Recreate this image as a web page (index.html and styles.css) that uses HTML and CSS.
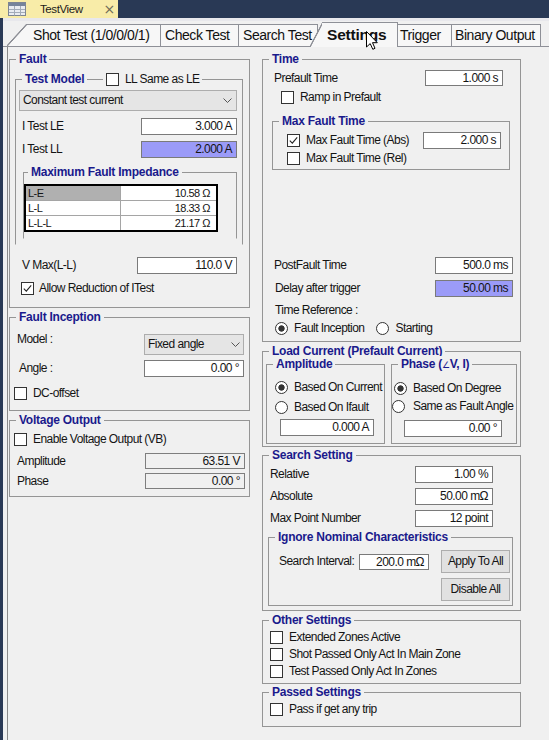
FILE: index.html
```html
<!DOCTYPE html>
<html>
<head>
<meta charset="utf-8">
<title>TestView</title>
<link rel="stylesheet" href="styles.css">
</head>
<body>
<div class="docbar">
  <div class="doctab">
    <svg class="docicon" viewBox="0 0 18 14"><rect x="0.5" y="0.5" width="17" height="13" fill="#e9ecf1" stroke="#7d8594"/><rect x="1" y="1" width="16" height="3" fill="#76849b"/><path d="M6.5 4v9.5M12.5 4v9.5M1 7.5h16M1 10.5h16" stroke="#a3acb9" stroke-width="1"/></svg>
    <span class="doctitle">TestView</span>
    <span class="docclose">×</span>
  </div>
</div>
<div class="main">
  <div class="docline"></div>
  <div class="tabs">
    <div class="tab slant t1">Shot Test (1/0/0/0/1)</div>
    <div class="tab plain t2">Check Test</div>
    <div class="tab plain t3">Search Test</div>
    <div class="tab slant sel">Settings</div>
    <div class="tab plain t5">Trigger</div>
    <div class="tab plain t6">Binary Output</div>
    <svg class="cursor" viewBox="0 0 12 19"><path d="M0.5 0.5V16L4.2 12.6L6.8 18.3L9 17.3L6.5 11.7H11.3Z" fill="#fff" stroke="#000" stroke-width="1" stroke-linejoin="round"/></svg>
  </div>
  <div class="page">
    <div class="col left">
      <div class="group g-fault">
        <span class="gt">Fault</span>
        <div class="group g-tm">
          <span class="gt">Test Model</span>
          <span class="gt gt-cb"><span class="cb"></span>LL Same as LE</span>
          <div class="combo c-model"><span>Constant test current</span><svg class="chev" viewBox="0 0 9 5"><polyline points="0.5,0.5 4.5,4.5 8.5,0.5"/></svg></div>
          <div class="row r-itle"><span class="lbl l6">I Test LE</span><span class="fld w96">3.000 A</span></div>
          <div class="row r-itll"><span class="lbl l6">I Test LL</span><span class="fld w96 hl">2.000 A</span></div>
          <div class="group g-mfi">
            <span class="gt">Maximum Fault Impedance</span>
            <div class="imp">
              <div class="c k selc">L-E</div><div class="c v">10.58 Ω</div>
              <div class="c k">L-L</div><div class="c v">18.33 Ω</div>
              <div class="c k last">L-L-L</div><div class="c v last">21.17 Ω</div>
            </div>
          </div>
        </div>
        <div class="row r-vmax"><span class="lbl l12">V Max(L-L)</span><span class="fld w100 m12">110.0 V</span></div>
        <div class="row r-allow"><span class="cb"><svg viewBox="0 0 11 11"><polyline points="1.8,5.6 4.3,8.1 9.2,2.4" fill="none" stroke="#222" stroke-width="1.1"/></svg></span><span>Allow Reduction of ITest</span></div>
      </div>

      <div class="group g-finc">
        <span class="gt">Fault Inception</span>
        <div class="row r-model"><span class="lbl l7 up">Model :</span><div class="combo c-fixed"><span>Fixed angle</span><svg class="chev" viewBox="0 0 9 5"><polyline points="0.5,0.5 4.5,4.5 8.5,0.5"/></svg></div></div>
        <div class="row r-angle"><span class="lbl l9">Angle :</span><span class="fld w100 m5">0.00 °</span></div>
        <div class="row r-dc"><span class="cb"></span><span>DC-offset</span></div>
      </div>

      <div class="group g-vout">
        <span class="gt">Voltage Output</span>
        <div class="row r-en"><span class="cb"></span><span>Enable Voltage Output (VB)</span></div>
        <div class="row r-amp"><span class="lbl l7">Amplitude</span><span class="fld dis w100 m4">63.51 V</span></div>
        <div class="row r-ph"><span class="lbl l7">Phase</span><span class="fld dis w100 m4">0.00 °</span></div>
      </div>
    </div>

    <div class="col right">
      <div class="group g-time">
        <span class="gt">Time</span>
        <div class="row r-pre"><span class="lbl l11">Prefault Time</span><span class="fld w78 m17">1.000 s</span></div>
        <div class="row r-ramp"><span class="cb"></span><span>Ramp in Prefault</span></div>
        <div class="group g-mft">
          <span class="gt">Max Fault Time</span>
          <div class="row r-abs"><span class="cb"><svg viewBox="0 0 11 11"><polyline points="1.8,5.6 4.3,8.1 9.2,2.4" fill="none" stroke="#222" stroke-width="1.1"/></svg></span><span>Max Fault Time (Abs)</span><span class="fld w78 m8">2.000 s</span></div>
          <div class="row r-rel"><span class="cb"></span><span>Max Fault Time (Rel)</span></div>
        </div>
        <div class="row r-post"><span class="lbl l11">PostFault Time</span><span class="fld w78 m7">500.0 ms</span></div>
        <div class="row r-delay"><span class="lbl l12">Delay after trigger</span><span class="fld w78 m7 hl">50.00 ms</span></div>
        <div class="r-tref">Time Reference :</div>
        <div class="row r-radio"><span class="rd on"></span><span>Fault Inception</span><span class="rd rd2"></span><span>Starting</span></div>
      </div>

      <div class="group g-load">
        <span class="gt">Load Current (Prefault Current)</span>
        <div class="load-in">
          <div class="group g-amp">
            <span class="gt">Amplitude</span>
            <div class="row r-bc"><span class="rd on"></span><span>Based On Current</span></div>
            <div class="row r-bi"><span class="rd"></span><span>Based On Ifault</span></div>
            <span class="fld f-amp">0.000 A</span>
          </div>
          <div class="group g-pha">
            <span class="gt">Phase (<span class="ang">∠</span>V, I)</span>
            <div class="row r-bd"><span class="rd on"></span><span>Based On Degree</span></div>
            <div class="row r-sf"><span class="rd"></span><span>Same as Fault Angle</span></div>
            <span class="fld f-pha">0.00 °</span>
          </div>
        </div>
      </div>

      <div class="group g-search">
        <span class="gt">Search Setting</span>
        <div class="row r-s r-s1"><span class="lbl l7">Relative</span><span class="fld w78 m27">1.00 %</span></div>
        <div class="row r-s"><span class="lbl l7">Absolute</span><span class="fld w78 m27">50.00 mΩ</span></div>
        <div class="row r-s"><span class="lbl l7">Max Point Number</span><span class="fld w78 m27">12 point</span></div>
        <div class="group g-ign">
          <span class="gt">Ignore Nominal Characteristics</span>
          <div class="row r-si"><span class="lbl si-l">Search Interval:</span><span class="fld si-f">200.0 mΩ</span><span class="btn si-b">Apply To All</span></div>
          <span class="btn btn2">Disable All</span>
        </div>
      </div>

      <div class="group g-other">
        <span class="gt">Other Settings</span>
        <div class="row r-o r-o1"><span class="cb"></span><span>Extended Zones Active</span></div>
        <div class="row r-o"><span class="cb"></span><span>Shot Passed Only Act In Main Zone</span></div>
        <div class="row r-o"><span class="cb"></span><span>Test Passed Only Act In Zones</span></div>
      </div>

      <div class="group g-pass">
        <span class="gt">Passed Settings</span>
        <div class="row r-o r-o1"><span class="cb"></span><span>Pass if get any trip</span></div>
      </div>
    </div>
  </div>
</div>
</body>
</html>
```

FILE: styles.css
```css
* { box-sizing: border-box; }
html, body { margin: 0; padding: 0; }
body {
  width: 549px; height: 740px; overflow: hidden;
  background: #293955;
  font-family: "Liberation Sans", Arial, sans-serif;
  font-size: 12px; line-height: 15px; letter-spacing: -0.55px; color: #141414;
}
.docbar { height: 18px; display: flex; }
.doctab { width: 118px; height: 18px; background: #f8eca8; display: flex; align-items: center; }
.docicon { display: block; margin-left: 8px; width: 18px; height: 14px; }
.doctitle { margin-left: 14px; font-size: 11.5px; letter-spacing: -0.4px; color: #1b1b1b; }
.docclose { margin-left: 21px; font-size: 14px; letter-spacing: 0; color: #6f6b58; font-family: "DejaVu Sans", sans-serif; }

.main { margin-left: 3px; height: 722px; background: #f0f0f0; }
.docline { height: 3px; background: #e8e8ec; }

.tabs { position: relative; display: flex; align-items: flex-end; height: 26px; padding-left: 4px; border-bottom: 1px solid #8e9097; }
.tab { position: relative; z-index: 1; height: 22px; font-size: 14px; letter-spacing: -0.45px; line-height: 21px; white-space: nowrap; color: #111; flex: none; }
.tab.plain { border-top: 1px solid #8e9097; border-right: 1px solid #8e9097; background: #f7f7f7; overflow: hidden; }
.tab.slant { --bg: #f7f7f7; padding-top: 1px; }
.tab.slant::before {
  content: ""; position: absolute; z-index: -1; left: 0; top: 0; bottom: 0;
  background: linear-gradient(to bottom right, transparent calc(50% - 1px), #8e9097 calc(50% - 0.4px), #8e9097 calc(50% + 0.4px), var(--bg) calc(50% + 1px));
}
.tab.slant::after {
  content: ""; position: absolute; z-index: -1; top: 0; bottom: 0; right: 0;
  background: var(--bg); border-top: 1px solid #8e9097; border-right: 1px solid #8e9097;
}
.t1 { width: 154px; padding-left: 26px; }
.t1::before { width: 20px; }
.t1::after { left: 20px; }
.t2 { width: 78px; padding-left: 4px; }
.t3 { width: 79px; padding-left: 4px; }
.sel { --bg: #fbfbfb; z-index: 2; width: 88px; height: 25px; margin-left: -8px; margin-bottom: -1px; padding-left: 17px; font-weight: bold; font-size: 15.5px; letter-spacing: -0.2px; line-height: 24px; }
.tab.sel::before { width: 13px; }
.tab.sel::after { left: 12px; }
.t5 { width: 54px; padding-left: 2px; }
.t6 { width: 89px; padding-left: 3px; }
.cursor { position: absolute; left: 363px; top: 10px; z-index: 5; width: 12px; height: 19px; }

.page { display: flex; align-items: flex-start; gap: 12px; margin-left: 4px; padding-left: 1px; border-left: 1px solid #8a8a8a; height: 695px; }
.col { flex: none; }
.left { width: 241px; }
.right { width: 259px; }

.group { position: relative; border: 1px solid #959595; }
.gt {
  position: absolute; top: -9px; left: 6px; padding: 0 3px;
  background: #f0f0f0; font-weight: bold; font-size: 12px; letter-spacing: -0.25px; line-height: 16px;
  color: #1a1a8c; white-space: nowrap;
}
.ang { font-size: 9px; font-weight: normal; }
.gt-cb { left: 87px; top: -8px; display: flex; align-items: center; gap: 6px; font-weight: normal; font-size: 12px; letter-spacing: -0.55px; line-height: 15px; color: #141414; }

.row { display: flex; align-items: center; }
.lbl { white-space: nowrap; }
.l6 { margin-left: 6px; } .l7 { margin-left: 7px; } .l9 { margin-left: 9px; }
.l11 { margin-left: 11px; } .l12 { margin-left: 12px; }
.up { margin-top: -2px; }

.fld {
  display: block; height: 17px; border: 1px solid #7a7a7a; background: #fff;
  text-align: right; padding-right: 4px; line-height: 15px; white-space: nowrap; margin-left: auto;
}
.fld.hl { background: #9b9bf8; }
.fld.dis { background: #f0f0f0; border-color: #7e7e7e; height: 16px; line-height: 14px; }
.w78 { width: 78px; } .w96 { width: 96px; margin-right: 5px; } .w100 { width: 100px; }
.m4 { margin-right: 4px; } .m5 { margin-right: 5px; } .m7 { margin-right: 7px; } .m8 { margin-right: 8px; }
.m12 { margin-right: 12px; } .m17 { margin-right: 17px; } .m27 { margin-right: 27px; }

.cb { display: inline-block; flex: none; width: 13px; height: 13px; border: 1px solid #333; background: #fff; }
.cb svg { display: block; width: 11px; height: 11px; }
.rd { display: inline-block; flex: none; width: 13px; height: 13px; border: 1px solid #333; border-radius: 50%; background: #fff; }
.rd.on { background: radial-gradient(circle, #333 0, #333 2.8px, #fff 3.5px); }

.combo { display: flex; align-items: center; height: 21px; border: 1px solid #adadad; background: #e5e5e5; padding-left: 3px; white-space: nowrap; }
.chev { width: 9px; height: 5px; margin-left: auto; fill: none; stroke: #555; stroke-width: 1; }
.c-model { margin: 10px 5px 0 3px; }
.c-model .chev { margin-right: 4px; }
.c-fixed { width: 100px; margin-left: auto; margin-right: 5px; }
.c-fixed .chev { margin-right: 3px; }

.btn { display: flex; align-items: center; justify-content: center; width: 69px; height: 23px; border: 1px solid #adadad; background: #e1e1e1; white-space: nowrap; }

/* left column */
.g-fault { height: 249px; margin-top: 12px; }
.g-tm { height: 166px; margin: 19px 6px 0 5px; border-bottom-color: transparent; }
.r-itle { height: 17px; margin-top: 7px; }
.r-itll { height: 17px; margin-top: 6px; }
.g-mfi { height: 67px; margin: 14px 5px 0 7px; border-bottom-color: transparent; }
.g-mfi .gt { left: 4px; }
.imp { display: grid; grid-template-columns: 95px 1fr; width: 194px; margin-top: 11px; border: 2px solid #000; background: #fff; font-size: 11px; letter-spacing: -0.5px; line-height: 14px; }
.imp .c { height: 15px; border-bottom: 1px solid #a5a5a5; padding-left: 2px; white-space: nowrap; }
.imp .k { border-right: 1px solid #a5a5a5; }
.imp .v { text-align: right; padding-right: 6px; }
.imp .last { border-bottom: none; height: 14px; }
.imp .selc { background: #b0b0b0; }
.r-vmax { height: 17px; margin-top: 12px; }
.r-allow { height: 13px; margin-top: 8px; margin-left: 11px; gap: 5px; }

.g-finc { height: 94px; margin-top: 9px; }
.r-model { align-items: flex-start; height: 21px; margin-top: 16px; }
.r-angle { height: 17px; margin-top: 5px; }
.r-dc { height: 13px; margin-top: 10px; margin-left: 4px; gap: 6px; }
.g-vout { height: 77px; margin-top: 9px; }
.r-en { height: 13px; margin-top: 12px; margin-left: 4px; gap: 6px; }
.r-amp { height: 16px; margin-top: 7px; }
.r-ph { height: 16px; margin-top: 4px; }

/* right column */
.g-time { height: 283px; margin-top: 12px; }
.r-pre { height: 16px; margin-top: 10px; }
.r-pre .fld { height: 16px; line-height: 14px; }
.r-ramp { height: 13px; margin-top: 5px; margin-left: 18px; gap: 6px; }
.g-mft { height: 49px; margin: 17px 10px 0 9px; }
.r-abs { height: 17px; margin-top: 10px; margin-left: 14px; gap: 6px; }
.r-rel { height: 13px; margin-top: 3px; margin-left: 14px; gap: 6px; }
.r-post { height: 17px; margin-top: 87px; }
.r-delay { height: 17px; margin-top: 6px; }
.r-tref { height: 14px; margin-top: 6px; margin-left: 12px; line-height: 14px; }
.r-radio { height: 13px; margin-top: 5px; margin-left: 12px; gap: 6px; }
.rd2 { margin-left: 6px; }

.g-load { height: 96px; margin-top: 9px; }
.load-in { display: flex; gap: 6px; margin: 12px 0 0 3px; }
.g-amp { width: 119px; height: 80px; }
.g-pha { width: 126px; height: 80px; }
.r-bc { height: 13px; margin-top: 16px; margin-left: 8px; gap: 6px; }
.r-bi { height: 13px; margin-top: 7px; margin-left: 8px; gap: 6px; }
.f-amp { width: 94px; margin: 5px 0 0 13px; }
.r-bd { height: 13px; margin-top: 17px; margin-left: 2px; gap: 6px; }
.r-sf { height: 13px; margin-top: 5px; gap: 8px; }
.f-pha { width: 98px; margin: 7px 0 0 12px; }

.g-search { height: 156px; margin-top: 8px; }
.r-s { height: 17px; margin-top: 5px; }
.r-s1 { margin-top: 10px; }
.g-ign { width: 245px; height: 69px; margin: 10px 0 0 5px; }
.r-si { height: 23px; margin-top: 12px; }
.si-l { width: 80px; margin-left: 10px; }
.si-f { width: 70px; height: 16px; line-height: 14px; margin-left: 0; }
.si-b { margin-left: 12px; }
.btn2 { margin: 5px 0 0 172px; }

.g-other { height: 64px; margin-top: 9px; }
.g-pass { height: 35px; margin-top: 8px; }
.r-o { height: 13px; margin-top: 4px; margin-left: 7px; gap: 6px; }
.r-o1 { margin-top: 10px; }
```
